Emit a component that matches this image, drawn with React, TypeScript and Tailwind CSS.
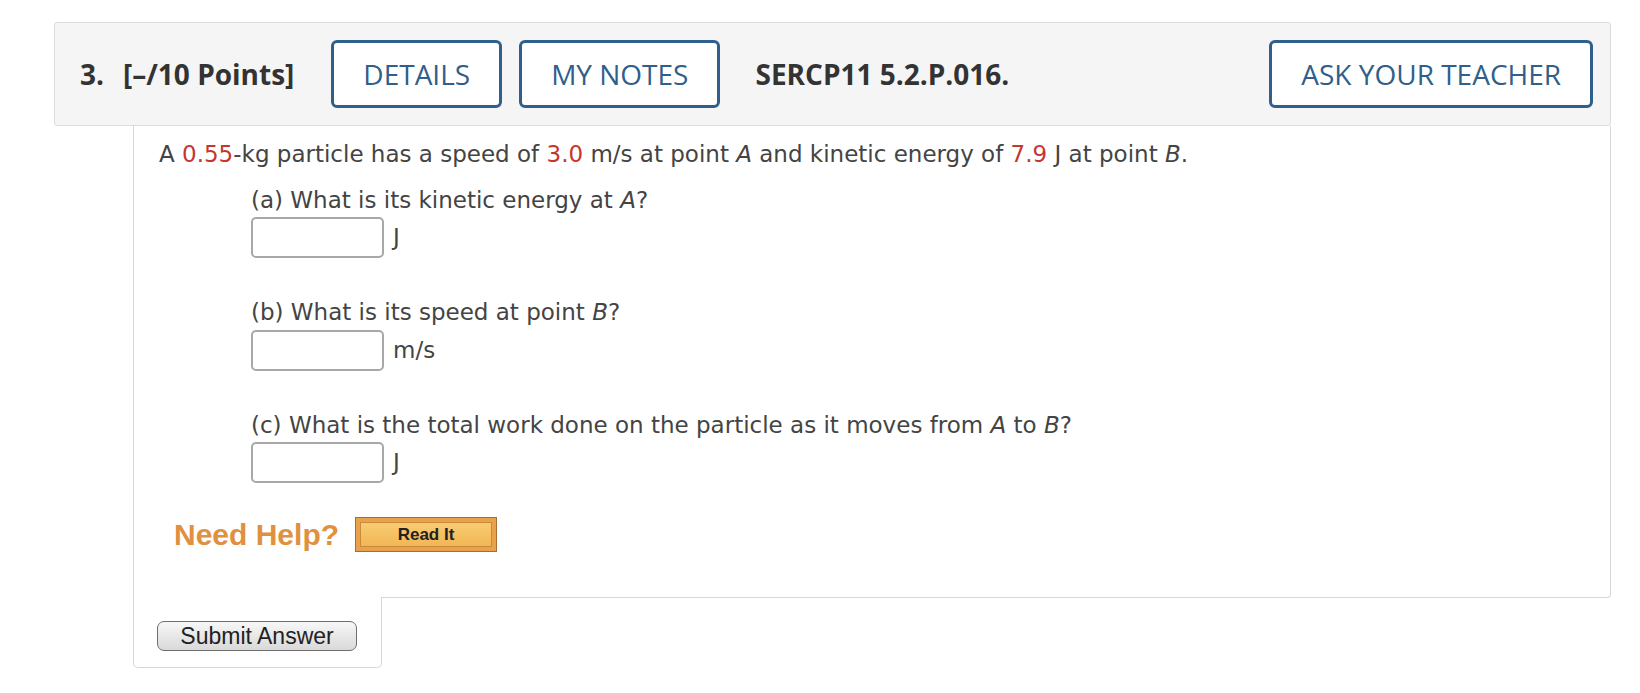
import React from 'react';

function HeaderButton({ label }: { label: string }) {
  return (
    <button className="flex h-[68px] items-center rounded-[6px] border-[3px] border-[#2f5f8a] bg-white px-[29px] font-['Open_Sans',sans-serif] text-[28px] text-[#2f5f8a]">
      {label}
    </button>
  );
}

function Answer({ label, unit, inputGap }: { label: React.ReactNode; unit: string; inputGap: string }) {
  return (
    <div className="flex flex-col">
      <p className="leading-[28px]">{label}</p>
      <div className={`${inputGap} flex items-center gap-[9px]`}>
        <div className="h-[41px] w-[133px] rounded-[5px] border-2 border-[#a8a8a8] bg-white" />
        <span className="-mt-[2px] leading-[28px]">{unit}</span>
      </div>
    </div>
  );
}

export default function App() {
  return (
    <div className="min-h-screen bg-white pt-[22px] pl-[54px]">
      {/* question header */}
      <div className="flex h-[104px] w-[1557px] items-center rounded-[3px] border border-[#dcdcdc] bg-[#f5f5f5] pr-[17px] pl-[25px] font-['Open_Sans',sans-serif] text-[#333]">
        <span className="text-[28px] font-bold">3.</span>
        <span className="ml-[19px] text-[28px] font-bold">[–/10 Points]</span>
        <div className="ml-[37px] flex gap-[17px]">
          <HeaderButton label="DETAILS" />
          <HeaderButton label="MY NOTES" />
        </div>
        <span className="ml-[35px] text-[28px] font-bold">SERCP11 5.2.P.016.</span>
        <div className="ml-auto">
          <HeaderButton label="ASK YOUR TEACHER" />
        </div>
      </div>

      {/* question body */}
      <div className="ml-[79px] h-[472px] w-[1478px] rounded-br-[4px] border-x border-b border-[#d6d6d6] bg-white pt-[14px] pl-[25px] font-['DejaVu_Sans',Verdana,sans-serif] text-[23px] text-[#444]">
        <p className="leading-[28px]">
          A <span className="text-[#c4372d]">0.55</span>-kg particle has a speed of{' '}
          <span className="text-[#c4372d]">3.0</span> m/s at point <i>A</i> and kinetic energy of{' '}
          <span className="text-[#c4372d]">7.9</span> J at point <i>B</i>.
        </p>
        <div className="mt-[18px] ml-[92px] flex flex-col gap-[40px]">
          <Answer label={<>(a) What is its kinetic energy at <i>A</i>?</>} unit="J" inputGap="mt-[3px]" />
          <Answer label={<>(b) What is its speed at point <i>B</i>?</>} unit="m/s" inputGap="mt-[4px]" />
          <Answer label={<>(c) What is the total work done on the particle as it moves from <i>A</i> to <i>B</i>?</>} unit="J" inputGap="mt-[3px]" />
        </div>
        <div className="mt-[34px] ml-[15px] flex items-center gap-[16px]">
          <span className="font-['Liberation_Sans',Arial,sans-serif] text-[30px] leading-none font-bold text-[#e0903e]">Need Help?</span>
          <div className="border border-[#a56f31] bg-[#e9a24c] p-[4px]">
            <div className="flex h-[25px] w-[132px] items-center justify-center border border-[#c98a3b] bg-gradient-to-b from-[#f8cc72] to-[#f2b653] font-['Liberation_Sans',Arial,sans-serif] text-[17px] font-bold text-[#222]">
              Read It
            </div>
          </div>
        </div>
      </div>

      {/* submit */}
      <div className="-mt-px ml-[79px] w-[249px] rounded-b-[5px] border-x border-b border-[#d6d6d6] bg-white pt-[24px] pb-[16px] pl-[23px]">
        <button className="flex h-[30px] w-[200px] items-center justify-center rounded-[7px] border border-[#6e6e6e] bg-gradient-to-b from-[#f7f7f7] to-[#d9d9d9] font-['Liberation_Sans',Arial,sans-serif] text-[23px] leading-none text-[#222]">
          Submit Answer
        </button>
      </div>
    </div>
  );
}
